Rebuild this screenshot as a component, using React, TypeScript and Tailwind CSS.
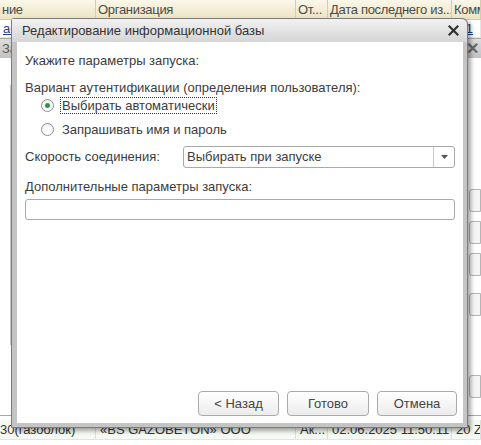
import React from 'react';

// Фон: таблица списка баз + окно позади диалога
const cols = [
  { w: 'w-[96px]', head: 'ние', row: 'ao', last: '30(газоблок)' },
  { w: 'w-[200px]', head: 'Организация', row: '', last: '«BS GAZOBETON» ООО' },
  { w: 'w-[32px]', head: 'От...', row: '', last: 'Ак...' },
  { w: 'w-[124px]', head: 'Дата последнего из...', row: '', last: '02.06.2025 11:50:11' },
  { w: 'w-[29px]', head: 'Комм', row: 'р.1', last: '20 Z 4' },
];

const RadioItem: React.FC<{ checked?: boolean; label: string; focused?: boolean }> = ({ checked, label, focused }) => (
  <div className="flex items-center h-[24px] pl-[16px]">
    <span className="w-[13px] h-[13px] rounded-full border border-[#8e8e8e] bg-gradient-to-b from-[#f4f4f4] to-white flex items-center justify-center">
      {checked && <span className="w-[5px] h-[5px] rounded-full bg-[#2a9a4a]" />}
    </span>
    <span
      className={
        'ml-[6px] px-[1px] leading-[15px] ' +
        (focused ? 'border border-dotted border-[#333]' : 'border border-transparent')
      }
    >
      {label}
    </span>
  </div>
);

const DlgButton: React.FC<{ label: string; w: string }> = ({ label, w }) => (
  <button
    className={
      w +
      ' h-[25px] rounded-[4px] border border-[#aaaaaa] bg-gradient-to-b from-white to-[#ececec] text-[13px] text-[#444]'
    }
  >
    {label}
  </button>
);

export default function App() {
  return (
    <div
      className="relative w-[481px] h-[445px] overflow-hidden bg-white text-[13px] text-[#3c3c3c]"
      style={{ fontFamily: '"Liberation Sans", Arial, sans-serif' }}
    >
      {/* шапка таблицы */}
      <div className="flex h-[20px] bg-gradient-to-b from-[#fbf8ea] to-[#ece3c2] border-b border-[#d3c9a3]">
        {cols.map((c, i) => (
          <div
            key={i}
            className={c.w + ' shrink-0 border-r border-[#d6cca6] px-[2px] leading-[20px] tracking-[-0.3px] whitespace-nowrap overflow-hidden text-[#4a4a4a]'}
          >
            {c.head}
          </div>
        ))}
      </div>
      <div className="flex h-[18px] border-b border-[#e4e4e4]">
        {cols.map((c, i) => (
          <div key={i} className={c.w + ' shrink-0 border-r border-[#e4e4e4] px-[3px] leading-[18px] whitespace-nowrap overflow-hidden'}>
            {c.row && <span className="underline text-[#1c3c8c]">{c.row}</span>}
          </div>
        ))}
      </div>

      {/* нижняя строка таблицы */}
      <div className="absolute left-0 top-[420px] w-full">
        <div className="flex h-[20px] bg-[#f6faf4] border-b border-[#e4e4e4]">
          {cols.map((c, i) => (
            <div
              key={i}
              className={c.w + ' shrink-0 border-r border-[#dedede] px-[4px] leading-[20px] whitespace-nowrap overflow-hidden text-[#333]'}
            >
              {i === 0 ? <span className="-ml-[4px]">{c.last}</span> : c.last}
            </div>
          ))}
        </div>
      </div>

      {/* окно позади */}
      <div className="absolute left-[-10px] top-[38px] w-[502px] h-[378px] bg-white border border-[#a8a8a8]">
        <div className="flex items-center justify-between h-[19px] bg-gradient-to-b from-[#dedede] to-[#c2c2c2] pl-[11px] pr-[12px] text-[#5a5a5a]">
          <span>Заполнение</span>
          <span className="text-[16px] font-bold text-[#6a6a6a] leading-none">✕</span>
        </div>
        <div className="absolute left-[19px] top-[46px] w-[2px] h-[260px] bg-[#c9c9c9]" />
        <div className="absolute right-[10px] top-[150px] flex flex-col gap-[9px]">
          <span className="w-[12px] h-[23px] rounded-l-[3px] border border-[#b5b5b5] bg-[#f4f4f4]" />
          <span className="w-[12px] h-[23px] rounded-l-[3px] border border-[#b5b5b5] bg-[#f4f4f4]" />
          <span className="w-[12px] h-[23px] rounded-l-[3px] border border-[#b5b5b5] bg-[#f4f4f4]" />
          <span className="w-[12px] h-[23px] rounded-l-[3px] border border-[#b5b5b5] bg-[#f4f4f4] mt-[8px]" />
          <span className="w-[12px] h-[23px] rounded-l-[3px] border border-[#b5b5b5] bg-[#f4f4f4] mt-[50px]" />
        </div>
      </div>

      {/* диалог */}
      <div className="absolute left-[11px] top-[18px] w-[457px] h-[410px] flex flex-col border border-[#7c7c7c] rounded-tr-[6px] rounded-tl-[3px] bg-[#c4c4c4] shadow-[3px_3px_4px_rgba(0,0,0,0.35)]">
        <div className="flex items-center justify-between h-[23px] pl-[10px] pr-[8px] rounded-tr-[6px] bg-gradient-to-b from-[#f2f2f2] to-[#d5d5d5] text-[#333]">
          <span>Редактирование информационной базы</span>
          <svg width="11" height="11" viewBox="0 0 11 11">
            <path d="M1.5 1.5 L9.5 9.5 M9.5 1.5 L1.5 9.5" stroke="#333" strokeWidth="2.2" strokeLinecap="square" />
          </svg>
        </div>
        <div className="flex-1 mb-[4px] ml-[5px] mr-[4px] bg-white flex flex-col pl-[8px] pr-[8px] pt-[11px] pb-[7px]">
          <div className="leading-[15px]">Укажите параметры запуска:</div>
          <div className="leading-[15px] mt-[12px]">Вариант аутентификации (определения пользователя):</div>
          <div className="-mt-[2px]">
            <RadioItem checked focused label="Выбирать автоматически" />
            <RadioItem label="Запрашивать имя и пароль" />
          </div>
          <div className="flex items-center mt-[5px]">
            <span className="w-[158px] shrink-0">Скорость соединения:</span>
            <div className="flex-1 h-[22px] flex border border-[#a9a9a9] rounded-[3px]">
              <span className="flex-1 pl-[3px] leading-[20px]">Выбирать при запуске</span>
              <span className="w-[21px] border-l border-[#c8c8c8] flex items-center justify-center">
                <svg width="7" height="4" viewBox="0 0 7 4">
                  <path d="M0 0 L7 0 L3.5 4 Z" fill="#555" />
                </svg>
              </span>
            </div>
          </div>
          <div className="leading-[15px] mt-[11px]">Дополнительные параметры запуска:</div>
          <div className="h-[21px] mt-[5px] border border-[#a9a9a9] rounded-[3px]" />
          <div className="flex-1" />
          <div className="flex justify-end gap-[8px] -mr-[2px]">
            <DlgButton label="< Назад" w="w-[81px]" />
            <DlgButton label="Готово" w="w-[82px]" />
            <DlgButton label="Отмена" w="w-[80px]" />
          </div>
        </div>
      </div>
    </div>
  );
}
